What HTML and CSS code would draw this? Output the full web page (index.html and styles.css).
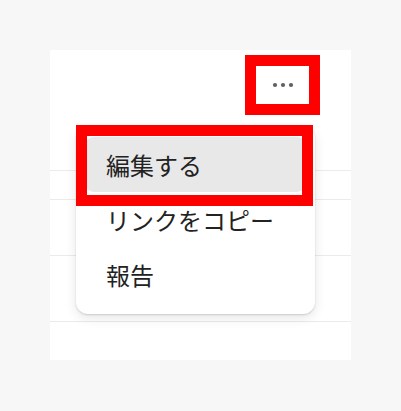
FILE: index.html
```html
<!DOCTYPE html>
<html lang="ja">
<head>
    <meta charset="UTF-8">
    <meta name="viewport" content="width=device-width, initial-scale=1.0">
    <title>Post menu</title>
    <link rel="stylesheet" href="styles.css">
</head>
<body>
    <div class="stage">
        <div class="panel">
            <div class="panel-header">
                <button class="more-button" aria-label="その他">
                    <svg width="22" height="6" viewBox="0 0 22 6">
                        <circle cx="3" cy="3" r="2.1" fill="#5f5f5f"/>
                        <circle cx="11" cy="3" r="2.1" fill="#5f5f5f"/>
                        <circle cx="19" cy="3" r="2.1" fill="#5f5f5f"/>
                    </svg>
                </button>
            </div>
            <div class="panel-row row-thin"></div>
            <div class="panel-row row-mid"></div>
            <div class="panel-row row-tall"></div>

            <!-- dropdown opened from the ... button -->
            <ul class="menu">
                <li class="menu-item active">編集する</li>
                <li class="menu-item">リンクをコピー</li>
                <li class="menu-item">報告</li>
            </ul>
        </div>

        <!-- annotation boxes -->
        <div class="mark mark-button"></div>
        <div class="mark mark-edit"></div>
    </div>
</body>
</html>
```

FILE: styles.css
```css
body {
    margin: 0;
    background: #f7f7f7;
    font-family: "Noto Sans CJK JP", "Noto Sans", sans-serif;
}
.stage {
    position: relative;
    width: 401px;
    height: 411px;
    padding: 50px;
    box-sizing: border-box;
}
.panel {
    position: relative;
    width: 301px;
    height: 310px;
    background: #fff;
}
.panel-header {
    display: flex;
    justify-content: flex-end;
    height: 121px;
    padding: 16px 42px 0 0;
    box-sizing: border-box;
    border-bottom: 1px solid #ebebeb;
}
.more-button {
    width: 53px;
    height: 38px;
    padding: 0;
    border: none;
    background: #fff;
    display: flex;
    align-items: center;
    justify-content: center;
}
.panel-row {
    border-bottom: 1px solid #ebebeb;
}
.row-thin {
    height: 28px;
}
.row-mid {
    height: 55px;
}
.row-tall {
    height: 65px;
}
.menu {
    position: absolute;
    left: 26px;
    top: 76px;
    width: 239px;
    height: 188px;
    margin: 0;
    padding: 11px 8px 12px;
    box-sizing: border-box;
    list-style: none;
    background: #fff;
    border-radius: 12px;
    box-shadow: 0 1px 2px rgba(0, 0, 0, 0.14), 0 4px 12px rgba(0, 0, 0, 0.1);
}
.menu-item {
    display: flex;
    align-items: center;
    height: 55px;
    padding-left: 22px;
    border-radius: 10px;
    font-size: 24px;
    color: #222;
}
.menu-item.active {
    background: #e8e8e8;
}
.mark {
    position: absolute;
    border: 11px solid #ff0000;
    box-sizing: border-box;
}
.mark-button {
    left: 245px;
    top: 55px;
    width: 75px;
    height: 60px;
}
.mark-edit {
    left: 76px;
    top: 125px;
    width: 237px;
    height: 81px;
}
```
